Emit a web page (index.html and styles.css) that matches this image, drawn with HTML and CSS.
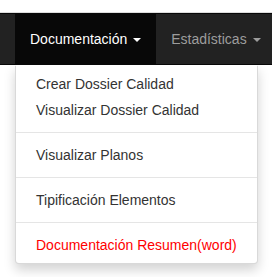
FILE: index.html
```html
<!DOCTYPE html>
<html lang="es">
<head>
    <meta charset="UTF-8">
    <meta name="viewport" content="width=device-width, initial-scale=1.0">
    <title>Menú Documentación</title>
    <link rel="stylesheet" href="styles.css">
</head>
<body>
    <div class="topbar"></div>
    <nav class="navbar">
        <ul class="nav">
            <li class="dropdown open">
                <a href="#" class="active">Documentación <span class="caret"></span></a>
                <ul class="dropdown-menu">
                    <li><a href="#">Crear Dossier Calidad</a></li>
                    <li><a href="#">Visualizar Dossier Calidad</a></li>
                    <li class="divider"></li>
                    <li><a href="#">Visualizar Planos</a></li>
                    <li class="divider"></li>
                    <li><a href="#">Tipificación Elementos</a></li>
                    <li class="divider"></li>
                    <li><a href="#" class="red">Documentación Resumen(word)</a></li>
                </ul>
            </li>
            <li class="dropdown">
                <a href="#">Estadísticas <span class="caret"></span></a>
            </li>
        </ul>
    </nav>
</body>
</html>
```

FILE: styles.css
```css
html, body {
    height: 100%;
}
body {
    font-family: "Liberation Sans", Arial, sans-serif;
    font-size: 14px;
    line-height: 20px;
    margin: 0;
    background: #fff;
    color: #333;
}
.topbar {
    height: 12px;
    border-bottom: 1px solid #ddd;
}
.navbar {
    position: relative;
    z-index: 10;
    background: #222;
    border-top: 1px solid #080808;
    border-bottom: 1px solid #080808;
    height: 50px;
    padding-left: 15px;
}
.nav {
    list-style: none;
    margin: 0;
    padding: 0;
    display: flex;
    white-space: nowrap;
}
.nav > li {
    position: relative;
}
.nav > li > a {
    display: block;
    padding: 15px;
    color: #9d9d9d;
    text-decoration: none;
}
.nav > li > a.active {
    background: #080808;
    color: #fff;
}
.caret {
    display: inline-block;
    width: 0;
    height: 0;
    margin-left: 2px;
    vertical-align: middle;
    border-top: 4px solid;
    border-left: 4px solid transparent;
    border-right: 4px solid transparent;
}
.dropdown-menu {
    position: absolute;
    top: 100%;
    left: 0;
    z-index: 1000;
    list-style: none;
    margin: 1px 0 0;
    padding: 5px 0;
    min-width: 160px;
    background-color: #fff;
    border: 1px solid rgba(0, 0, 0, 0.15);
    border-top-color: #fff;
    border-radius: 0 0 4px 4px;
    box-shadow: 0 6px 12px rgba(0, 0, 0, 0.175);
}
.dropdown-menu > li > a {
    display: block;
    padding: 3px 20px;
    color: #333;
    text-decoration: none;
}
.dropdown-menu > li > a.red {
    color: #f00;
}
.divider {
    height: 1px;
    margin: 9px 0;
    background: #e5e5e5;
}
```
